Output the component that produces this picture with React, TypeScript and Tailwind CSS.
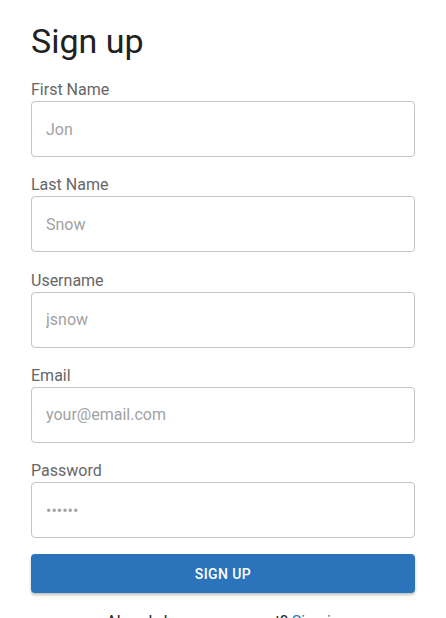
const fields = [
  { label: "First Name", placeholder: "Jon", type: "text" },
  { label: "Last Name", placeholder: "Snow", type: "text" },
  { label: "Username", placeholder: "jsnow", type: "text" },
  { label: "Email", placeholder: "your@email.com", type: "email" },
  { label: "Password", placeholder: "••••••", type: "password" },
];

export default function App() {
  return (
    <div className="min-h-screen bg-white px-[31px] pt-[20px] font-['Roboto',sans-serif]">
      <h1 className="text-[34px] leading-[42px] text-[#212121] mb-[16px]">Sign up</h1>
      <form className="flex flex-col gap-[16.3px]" onSubmit={(e) => e.preventDefault()}>
        {fields.map((f) => (
          <div key={f.label} className="flex flex-col">
            <label className="text-base leading-[23px] text-[#666666]">{f.label}</label>
            <input
              type="text"
              placeholder={f.placeholder}
              className="h-[56px] w-full rounded-[4px] border border-[#c4c4c4] px-[14px] text-base text-[#212121] outline-none placeholder:text-[#a2a2a2]"
            />
          </div>
        ))}
        <button
          type="submit"
          className="mt-[0px] h-[39px] w-full rounded-[4px] bg-[#2b74bc] text-sm font-medium tracking-[0.4px] text-white uppercase shadow-[0_2px_3px_rgba(0,0,0,0.25)]"
        >
          Sign up
        </button>
      </form>
      <p className="mt-[17px] text-center text-base text-[#1f1f1f]">
        Already have an account? <a className="text-[#2b74bc]">Sign in</a>
      </p>
    </div>
  );
}
